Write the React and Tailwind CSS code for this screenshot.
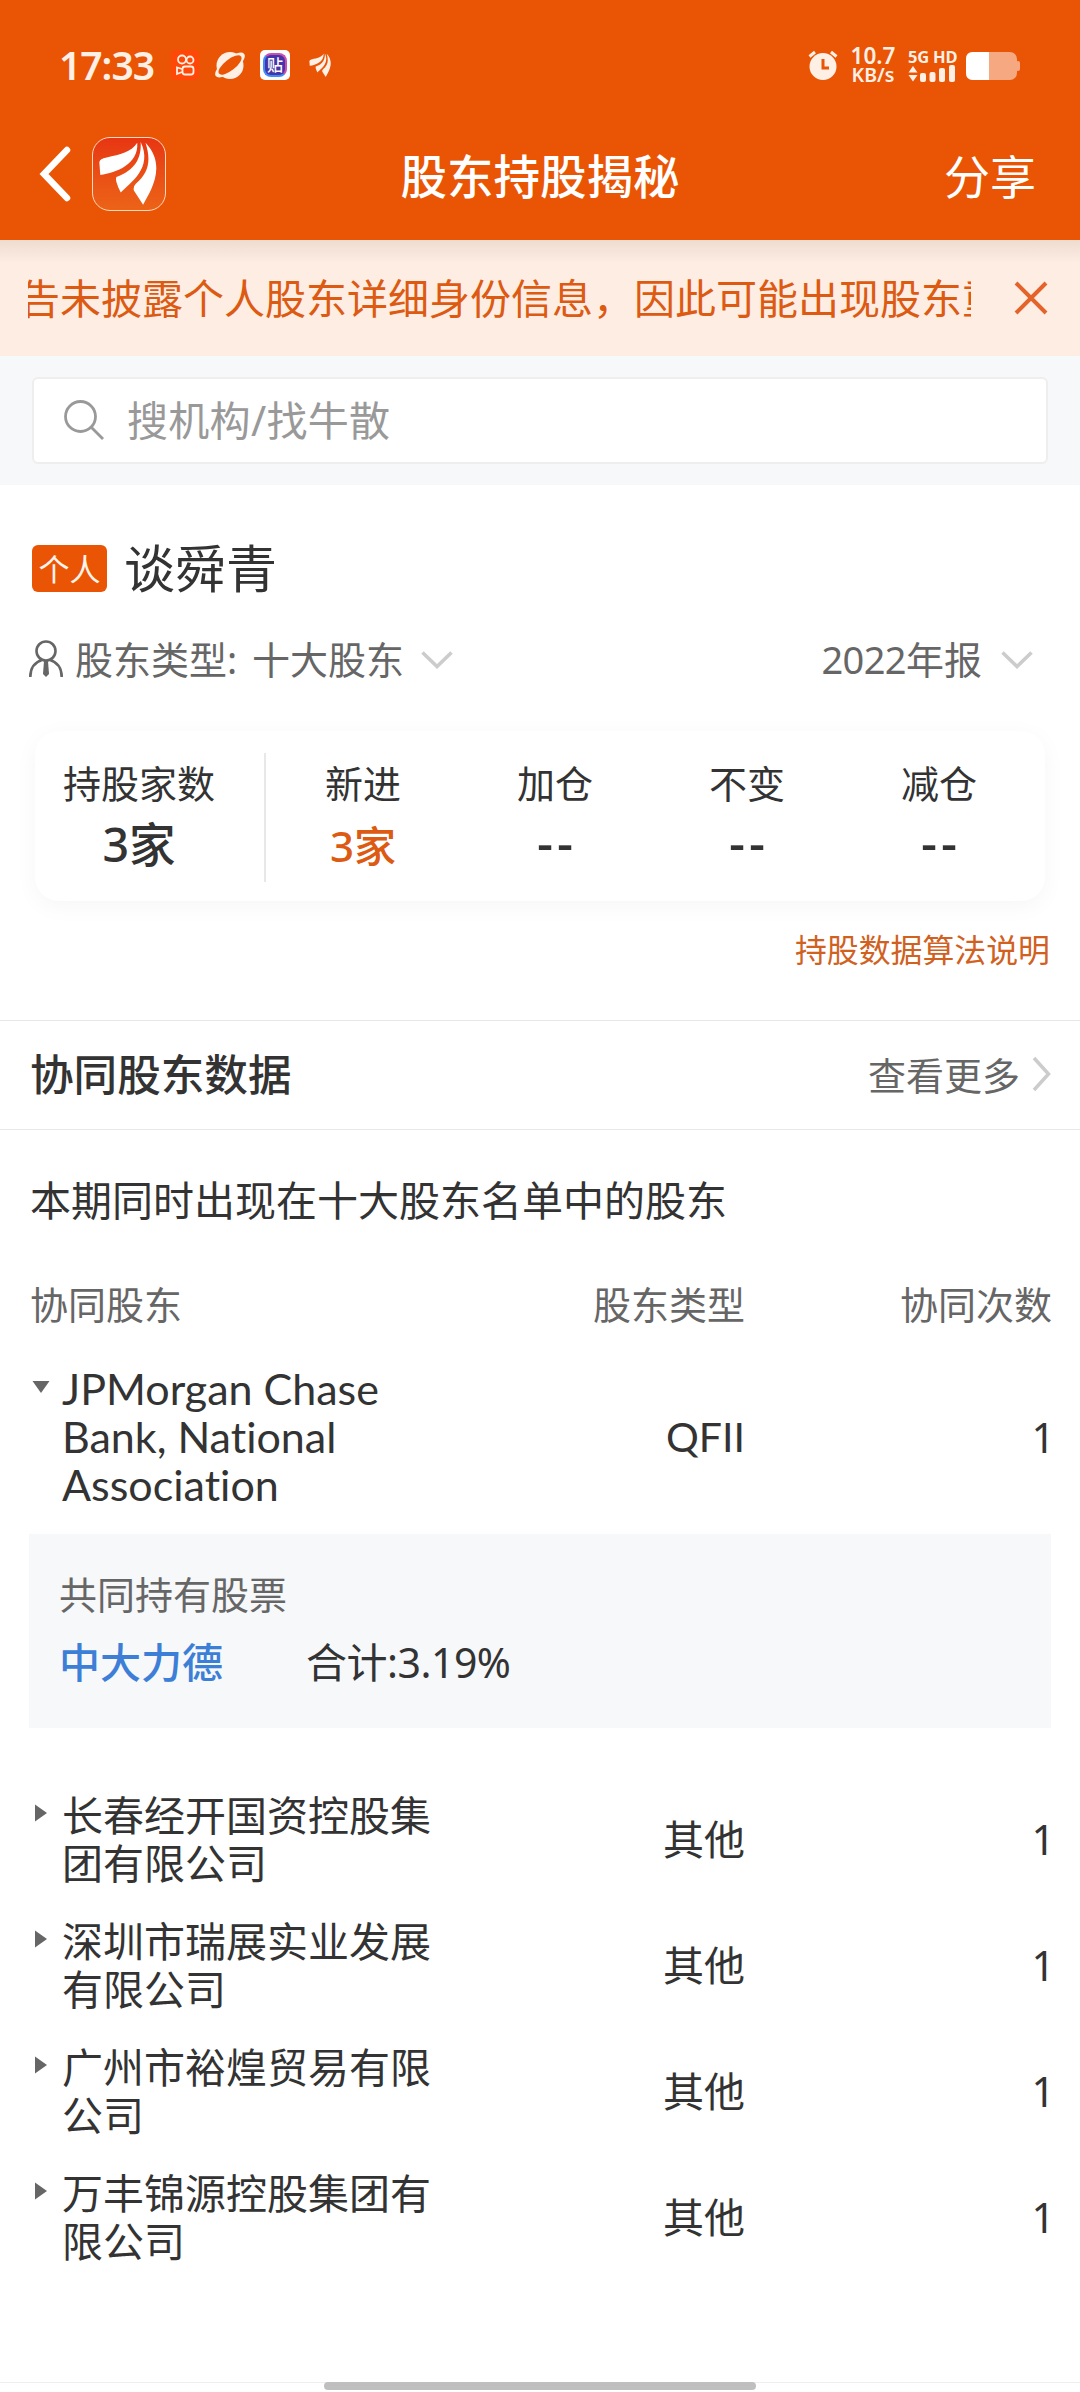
import React, { useState } from 'react';

const stats = [
  { label: '新进', value: '3家', active: true },
  { label: '加仓', value: '--' },
  { label: '不变', value: '--' },
  { label: '减仓', value: '--' },
];

const holders = [
  { name: 'JPMorgan Chase Bank, National Association', type: 'QFII', count: 1, latin: true, stock: '中大力德', ratio: '3.19%' },
  { name: '长春经开国资控股集团有限公司', type: '其他', count: 1 },
  { name: '深圳市瑞展实业发展有限公司', type: '其他', count: 1 },
  { name: '广州市裕煌贸易有限公司', type: '其他', count: 1 },
  { name: '万丰锦源控股集团有限公司', type: '其他', count: 1 },
];

const Feathers = ({ className }) => (
  <svg viewBox="0 0 74 74" className={className} fill="currentColor">
    <path d="M45.500 5C39 15 28 17 14 20Q7 21 6.500 25L7.500 38C24 36 47 27 45.500 5Z" />
    <path d="M49 4C50 21 43 33 24 40Q22 43 28.500 56C38 46 62 31 49 4Z" />
    <path d="M54 5C60 24 57 36 44 47Q41 50 42 54L51.500 68.500C58 56 77 29 54 5Z" />
  </svg>
);

const ChevronDown = ({ className }) => (
  <svg viewBox="0 0 32 20" className={className} fill="none" stroke="#cccccc" strokeWidth="3.600">
    <path d="M1.500 2.500L16 16.500L30.500 2.500" />
  </svg>
);

const StatusBar = () => (
  <div className="flex h-[130px] items-center pl-[59px] pr-[60px] text-[#fff0e6]">
    <span className="w-[112px] text-[39px] font-semibold tracking-[-1px]">17:33</span>
    <svg viewBox="0 0 28 30" className="h-[30px] w-[28px]" fill="none" stroke="currentColor" strokeWidth="1.800">
      <rect width="28" height="30" rx="5" fill="#ff4708" stroke="none" />
      <circle cx="11" cy="9.500" r="4" />
      <circle cx="19" cy="10" r="3.500" />
      <rect x="11.500" y="16.500" width="11" height="8" rx="2.500" />
      <path d="M11 19L6 17.500V24L11 22" />
    </svg>
    <svg viewBox="0 0 30 30" className="ml-4 h-[30px] w-[30px]" fill="currentColor">
      <circle cx="15" cy="15.500" r="13.500" />
      <ellipse cx="15" cy="15" rx="18" ry="7" transform="rotate(-38 15 15)" />
      <ellipse cx="15" cy="15" rx="14" ry="5.500" transform="rotate(-38 15 15)" fill="#e95504" />
    </svg>
    <div className="ml-[15px] flex h-[30px] w-[30px] items-center justify-center rounded-[5px] bg-white">
      <div className="flex h-[24px] w-[24px] items-center justify-center rounded-[8px] border-2 border-t-[#c94fb0] border-r-[#c94fb0] border-b-[#3f8cf5] border-l-[#3f8cf5] bg-[#4634a8] text-[16px] font-medium leading-none text-white">贴</div>
    </div>
    <Feathers className="ml-[17px] h-[27px] w-[27px]" />
    <div className="ml-auto flex items-center">
      <svg viewBox="0 0 30 30" className="h-[30px] w-[30px]" fill="currentColor">
        <circle cx="15" cy="16.500" r="13.500" />
        <path d="M1.500 6.500L7 2M23 2L28.500 6.500" stroke="currentColor" strokeWidth="3" />
        <path d="M15 9V18H21" fill="none" stroke="#e95504" strokeWidth="3" />
      </svg>
      <div className="ml-[12px] flex w-[46px] flex-col items-center whitespace-nowrap font-semibold">
        <div className="text-[22.500px] leading-[20px]">10.7</div>
        <div className="text-[19.500px] leading-[18px]">KB/s</div>
      </div>
      <div className="ml-[12px] w-[49px]">
        <div className="whitespace-nowrap text-[16.500px] font-bold leading-[17px] tracking-[-0.2px]">5G HD</div>
        <svg viewBox="0 0 48 17" className="h-[17px] w-[48px]" fill="currentColor">
          <path d="M0.500 7.500L5 1L9.500 7.500ZM0.500 10L5 16.500L9.500 10Z" />
          <rect x="12" y="8" width="6" height="9" rx="2" />
          <rect x="21.500" y="7" width="6" height="10" rx="2" />
          <rect x="31" y="3" width="6" height="14" rx="2" />
          <rect x="41" y="0" width="6" height="17" rx="2" />
        </svg>
      </div>
      <svg viewBox="0 0 54 28" className="ml-[9px] mt-[2px] h-[28px] w-[54px]">
        <rect width="51" height="28" rx="7" fill="#f6a981" />
        <rect x="50" y="9" width="4" height="10" rx="2" fill="#f6a981" />
        <path d="M7 0H23V28H7Q0 28 0 21V7Q0 0 7 0Z" fill="#ffffff" />
      </svg>
    </div>
  </div>
);

const NavBar = () => (
  <div className="flex h-[110px] items-start text-white">
    <div className="flex w-[300px] items-center pl-[39px] pt-[7px]">
      <svg viewBox="0 0 32 56" className="h-[56px] w-[32px]" fill="none" stroke="#ffffff" strokeWidth="6.500" strokeLinecap="round">
        <path d="M28 4L5 28L28 52" />
      </svg>
      <div className="ml-[21px] h-[74px] w-[74px] rounded-[18px] border border-[#ffd9bf] bg-linear-to-b from-[#e73513] to-[#ec6318]">
        <Feathers className="h-[72px] w-[72px]" />
      </div>
    </div>
    <h1 className="flex-1 pt-[11px] text-center text-[46.500px] font-medium leading-[70px]">股东持股揭秘</h1>
    <button className="w-[300px] pr-[44px] pt-[11px] text-right text-[46px] leading-[70px]">分享</button>
  </div>
);

const Notice = ({ onClose }) => (
  <div className="flex h-[116px] items-center bg-[#fdede3] bg-linear-to-b from-[#efdcd1] to-[#fdede3] to-[20%] pl-[28px] text-[#dc5a12]">
    <div className="w-[943px] overflow-hidden whitespace-nowrap text-[41px] leading-[60px]">
      <div className="-ml-[9px]">告未披露个人股东详细身份信息，因此可能出现股东重名</div>
    </div>
    <button onClick={onClose} className="ml-[43px]" aria-label="关闭">
      <svg viewBox="0 0 34 34" className="h-[34px] w-[34px]" fill="none" stroke="#e4632a" strokeWidth="4">
        <path d="M2 2L32 32M32 2L2 32" />
      </svg>
    </button>
  </div>
);

const SearchBox = () => (
  <div className="h-[129px] bg-[#f6f8fa] px-8 pt-[21px]">
    <div className="flex h-[87px] items-center rounded-md border-2 border-[#eeeeee] bg-white pl-[29px]">
      <svg viewBox="0 0 42 42" className="-mt-[2px] h-[42px] w-[42px]" fill="none" stroke="#999999" strokeWidth="2.800">
        <circle cx="17.500" cy="17.500" r="15" />
        <path d="M28 28L40 40" />
      </svg>
      <span className="ml-[22px] text-[41px] leading-none tracking-[0.3px] text-[#999999]">搜机构/找牛散</span>
    </div>
  </div>
);

const HolderRow = ({ holder, open, onToggle }) => (
  <>
    <div className="flex items-center py-[15px] text-[41px] leading-[48px] text-[#333333]" onClick={onToggle}>
      <div className="flex w-[408px] items-start">
        <svg viewBox="0 0 18 18" className={open ? 'mt-[13px] ml-[3px] h-[18px] w-[18px] rotate-90' : 'mt-[13px] ml-[3px] h-[18px] w-[18px]'} fill="#666666">
          <path d="M3 0.500L15 9L3 17.500Z" />
        </svg>
        <span className={holder.latin ? "ml-[12px] w-[375px] font-['Lato',sans-serif] text-[43px] [font-variant-ligatures:none]" : 'ml-[12px] w-[375px]'}>{holder.name}</span>
      </div>
      <span className={holder.latin ? "w-[308px] text-right font-['Lato',sans-serif]" : 'w-[308px] text-right'}>{holder.type}</span>
      <span className="-mr-[4px] flex-1 text-right">{holder.count}</span>
    </div>
    {open && (
      <div className="mb-[48px] mt-[10px] h-[194px] bg-[#f6f8fa] px-[30px] pt-[27px]">
        <div className="text-[38px] leading-[66px] text-[#666666]">共同持有股票</div>
        <div className="flex text-[41px] leading-[70px]">
          <span className="w-[247px] font-medium text-[#3d7fd6]">{holder.stock}</span>
          <span className="tracking-[-0.5px] text-[#333333]">合计:{holder.ratio}</span>
        </div>
      </div>
    )}
  </>
);

const App = () => {
  const [showNotice, setShowNotice] = useState(true);
  const [openIndex, setOpenIndex] = useState(0);

  return (
    <div className="flex h-[2392px] w-[1080px] flex-col overflow-hidden bg-white font-['Noto_Sans','Noto_Sans_CJK_SC',sans-serif] text-[#333333]">
      <header className="bg-[#e95504]">
        <StatusBar />
        <NavBar />
      </header>
      {showNotice && <Notice onClose={() => setShowNotice(false)} />}
      <SearchBox />

      <section className="h-[535px] px-8">
        <div className="flex items-center pt-[45px]">
          <span className="flex h-[47px] w-[75px] items-center justify-center rounded-md bg-[#e95504] pt-[2px] text-[31px] leading-none text-[#fff3ea]">个人</span>
          <span className="ml-[17px] text-[51px] leading-[76px]">谈舜青</span>
        </div>
        <div className="mt-[22px] flex h-[64px] items-center text-[38px] leading-[60px] text-[#666666]">
          <svg viewBox="0 0 34 38" className="-ml-[3px] -mt-[2px] h-[38px] w-[34px]" fill="none" stroke="#666666" strokeWidth="2.600">
            <circle cx="17" cy="11" r="9.500" />
            <path d="M1.300 37C1.300 28 6 22 13 20M32.700 37C32.700 28 28 22 21 20" />
            <path d="M15 21H19L20 34L17 37L14 34Z" fill="#666666" stroke="none" />
          </svg>
          <span className="-mt-[2px] ml-[12px] w-[177px]">股东类型:</span>
          <span className="-mt-[2px]">十大股东</span>
          <ChevronDown className="ml-[17px] h-[20px] w-[32px]" />
          <span className="-mt-[2px] ml-auto">
            <span className="tracking-[-0.6px]">2022</span>年报
          </span>
          <ChevronDown className="ml-[19px] mr-[15px] h-[20px] w-[32px]" />
        </div>
        <div className="mx-[3px] mt-[39px] flex h-[170px] rounded-[24px] bg-white pt-[22px] text-center shadow-[0_5px_24px_rgba(0,0,0,0.04)]">
          <div className="w-[208px]">
            <div className="-mt-[2px] text-[38px] leading-[64px]">持股家数</div>
            <div className="text-[46.500px] font-medium leading-[58px]">3家</div>
          </div>
          <div className="ml-[21px] mr-[1px] h-[129px] w-[2px] bg-[#e8e8e8]" />
          {stats.map((stat) => (
            <div key={stat.label} className="w-[192px]">
              <div className="-mt-[2px] text-[38px] leading-[64px]">{stat.label}</div>
              {stat.active ? (
                <div className="text-[42px] font-medium leading-[62px] text-[#dc5a12]">{stat.value}</div>
              ) : (
                <div className="pl-[4px] text-[50px] font-medium leading-[55px] tracking-[4px]">{stat.value}</div>
              )}
            </div>
          ))}
        </div>
        <div className="-mr-[2px] mt-[25px] text-right text-[31.900px] leading-[48px] text-[#d0611f]">持股数据算法说明</div>
      </section>

      <div className="flex h-[110px] items-center border-y border-[#e8e8e8] px-[30px]">
        <h2 className="text-[43.600px] font-medium">协同股东数据</h2>
        <span className="ml-auto text-[38px] text-[#666666]">查看更多</span>
        <svg viewBox="0 0 20 36" className="-mr-[2px] -mt-[2px] ml-[12px] h-[36px] w-[20px]" fill="none" stroke="#cccccc" strokeWidth="3.500">
          <path d="M2 2L16.500 18L2 34" />
        </svg>
      </div>

      <section className="px-[29px]">
        <div className="pl-[1px] pt-[39px] text-[41px] leading-[62px]">本期同时出现在十大股东名单中的股东</div>
        <div className="flex pt-[44px] text-[38px] leading-[58px] text-[#666666]">
          <span className="w-[408px] pl-[1px]">协同股东</span>
          <span className="w-[308px] text-right">股东类型</span>
          <span className="-mr-[1px] flex-1 text-right">协同次数</span>
        </div>
        <div className="pt-[17px]">
          {holders.map((holder, i) => (
            <HolderRow
              key={holder.name}
              holder={holder}
              open={openIndex === i && Boolean(holder.stock)}
              onToggle={() => setOpenIndex(openIndex === i ? -1 : i)}
            />
          ))}
        </div>
      </section>

      <footer className="mt-auto flex h-[10px] justify-center border-t border-[#eeeeee]">
        <div className="-mt-px h-[8px] w-[432px] rounded-full bg-[#bfbfbf]" />
      </footer>
    </div>
  );
};

export default App;
